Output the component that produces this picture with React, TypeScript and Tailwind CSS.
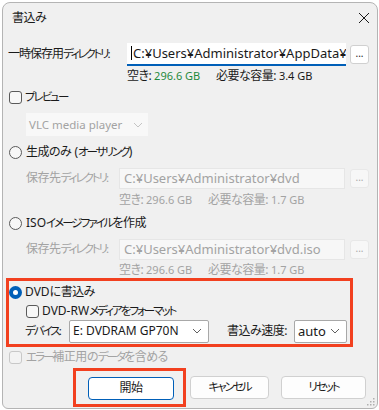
import React from "react";

const font = { fontFamily: '"Noto Sans", "Noto Sans CJK JP", sans-serif' };

// kanji-heavy Japanese text
const J: React.FC<{ children: React.ReactNode }> = ({ children }) => (
  <span className="text-[12px] tracking-[-0.5px] [font-feature-settings:'palt']">{children}</span>
);
// katakana / kana runs, narrow like Yu Gothic UI
const K: React.FC<{ children: React.ReactNode }> = ({ children }) => (
  <span className="text-[11.5px] tracking-[-2px] [font-feature-settings:'palt']">{children}</span>
);

const Chevron: React.FC<{ muted?: boolean }> = ({ muted }) => (
  <svg width="10" height="6" viewBox="0 0 10 6" className="shrink-0">
    <path d="M1 1l4 4 4-4" fill="none" stroke={muted ? "#c4c4c4" : "#606060"} strokeWidth="1" />
  </svg>
);

const Check: React.FC<{ disabled?: boolean }> = ({ disabled }) => (
  <span
    className={`w-[13px] h-[13px] rounded-[3px] border shrink-0 ${
      disabled ? "border-[#c8c8c8] bg-[#f3f3f3]" : "border-[#5a5a5a] bg-[#f7f7f7]"
    }`}
  />
);

const Radio: React.FC<{ checked?: boolean }> = ({ checked }) =>
  checked ? (
    <span className="w-[13px] h-[13px] rounded-full bg-[#005fb8] flex items-center justify-center shrink-0">
      <span className="w-[5px] h-[5px] rounded-full bg-white" />
    </span>
  ) : (
    <span className="w-[13px] h-[13px] rounded-full border border-[#5a5a5a] bg-[#f7f7f7] shrink-0" />
  );

const DotsButton: React.FC<{ disabled?: boolean }> = ({ disabled }) => (
  <div
    className={`w-[19px] h-[19px] rounded-[3px] border flex items-center justify-center text-[10px] leading-none pb-[3px] ${
      disabled ? "border-[#e8e8e8] bg-[#f7f7f7] text-[#a8a8a8]" : "border-[#d0d0d0] bg-white text-[#1a1a1a]"
    }`}
  >
    ...
  </div>
);

const PathRow: React.FC<{ path: string }> = ({ path }) => (
  <div className="h-[24px] flex items-center text-[#a3a3a3]">
    <span className="w-[116px] pl-[23px] shrink-0">
      <J>保存先</J>
      <K>ディレクトリ:</K>
    </span>
    <div className="w-[226px] h-[21px] border border-[#e6e6e6] bg-[#f7f7f7] flex items-center pl-[4px] overflow-hidden text-[13px]">
      {path}
    </div>
    <div className="ml-[5px]">
      <DotsButton disabled />
    </div>
  </div>
);

const SpaceRow: React.FC<{ need: string; h: string }> = ({ need, h }) => (
  <div className={`${h} flex items-center text-[#a3a3a3] pl-[116px] shrink-0 text-[11px]`}>
    <span className="w-[89px]">
      <J>空き:</J> 296.6 GB
    </span>
    <span>
      <J>必要な容量:</J> {need}
    </span>
  </div>
);

export default function App() {
  return (
    <div
      className="w-[379px] h-[410px] bg-white overflow-hidden text-[12px] leading-none whitespace-nowrap text-[#1a1a1a]"
      style={font}
    >
      <div className="ml-[2px] mt-[2px] w-[376px] h-[407px] rounded-t-[8px] rounded-b-[6px] border border-[#b4b4b4] bg-[#f0f0f0] flex flex-col relative">
        <div className="h-[29px] flex items-center justify-between pl-[9px] pr-[7px] shrink-0">
          <J>書込み</J>
          <svg width="12" height="12" viewBox="0 0 12 12">
            <path d="M1 1l10 10M11 1L1 11" stroke="#1a1a1a" strokeWidth="1" />
          </svg>
        </div>

        <div className="mt-[10px] h-[24px] flex items-center shrink-0">
          <span className="w-[124px] pl-[5px] shrink-0">
            <span className="text-[12px] tracking-[-1px] [font-feature-settings:'palt']">一時保存用</span>
            <span className="text-[11.5px] tracking-[-2.2px] [font-feature-settings:'palt']">ディレクトリ:</span>
          </span>
          <div className="w-[219px] h-[23px] bg-white border-b-2 border-[#005fb8] flex items-center pl-[4px] overflow-hidden text-[13px]">
            <span className="w-px h-[14px] bg-black mr-[1px] shrink-0" />
            C:¥Users¥Administrator¥AppData¥Local¥Temp
          </div>
          <div className="ml-[4px]">
            <DotsButton />
          </div>
        </div>

        <div className="h-[20px] flex items-center pl-[124px] shrink-0 text-[11px]">
          <span className="w-[89px]">
            <J>空き:</J> <span className="text-[#1f8a3c]">296.6 GB</span>
          </span>
          <span>
            <J>必要な容量:</J> 3.4 GB
          </span>
        </div>

        <div className="h-[22px] flex items-center gap-[3px] pl-[6px] shrink-0">
          <Check />
          <K>プレビュー</K>
        </div>

        <div className="h-[30px] pl-[23px] pt-[5px] shrink-0">
          <div className="w-[122px] h-[23px] bg-[#f8f8f8] flex items-center justify-between pl-[3px] pr-[5px] text-[#a3a3a3] text-[11.5px]">
            <span>VLC media player</span>
            <Chevron muted />
          </div>
        </div>

        <div className="h-[28px] flex items-center gap-[4px] pl-[6px] shrink-0">
          <Radio />
          <span>
            <J>生成のみ</J> (<K>オーサリング</K>)
          </span>
        </div>
        <PathRow path="C:¥Users¥Administrator¥dvd" />
        <SpaceRow need="1.7 GB" h="h-[20px]" />

        <div className="h-[26px] flex items-center gap-[4px] pl-[6px] shrink-0">
          <Radio />
          <span>
            ISO<K>イメージファイル</K>
            <J>を作成</J>
          </span>
        </div>
        <div className="h-[26px] flex items-center shrink-0">
          <div className="w-full">
            <PathRow path="C:¥Users¥Administrator¥dvd.iso" />
          </div>
        </div>
        <SpaceRow need="1.7 GB" h="h-[16px]" />

        <div className="ml-[3px] w-[347px] border-[3px] border-[#f2401f] pb-[1px] shrink-0">
          <div className="h-[22px] flex items-center gap-[3px]">
            <Radio checked />
            <span>
              DVD<J>に書込み</J>
            </span>
          </div>
          <div className="h-[16px] flex items-center gap-[3px] pl-[17px]">
            <Check />
            <span>
              DVD-RW<K>メディアをフォーマット</K>
            </span>
          </div>
          <div className="h-[24px] flex items-center pl-[16px]">
            <span className="w-[44px] shrink-0">
              <K>デバイス:</K>
            </span>
            <div className="w-[140px] h-[23px] bg-white border border-[#a8a8a8] rounded-[2px] flex items-center justify-between pl-[3px] pr-[6px]">
              <span>E: DVDRAM GP70N</span>
              <Chevron />
            </div>
            <span className="ml-[18px] w-[67px] shrink-0">
              <J>書込み速度:</J>
            </span>
            <div className="w-[53px] h-[23px] bg-white border border-[#a8a8a8] rounded-[2px] flex items-center justify-between pl-[3px] pr-[6px] text-[13px]">
              <span>auto</span>
              <Chevron />
            </div>
          </div>
        </div>

        <div className="h-[20px] flex items-center gap-[4px] pl-[6px] text-[#a3a3a3] shrink-0">
          <Check disabled />
          <span>
            <K>エラー</K>
            <J>補正用の</J>
            <K>データ</K>
            <J>を含める</J>
          </span>
        </div>

        <div className="h-[40px] flex items-center shrink-0">
          <div className="ml-[70px] w-[113px] h-[39px] border-[3px] border-[#f2401f] pl-[12px] pt-[6px]">
            <div className="w-[86px] h-[23px] bg-white border border-[#005fb8] rounded-[4px] flex items-center justify-center">
              <J>開始</J>
            </div>
          </div>
          <div className="ml-[4px] w-[79px] h-[23px] bg-[#fdfdfd] border border-[#d0d0d0] rounded-[4px] flex items-center justify-center">
            <K>キャンセル</K>
          </div>
          <div className="ml-[12px] w-[85px] h-[23px] bg-[#fdfdfd] border border-[#d0d0d0] rounded-[4px] flex items-center justify-center">
            <K>リセット</K>
          </div>
        </div>

        <svg width="8" height="8" viewBox="0 0 8 8" className="absolute right-[2px] bottom-[2px]">
          <rect x="6" y="0" width="1.5" height="1.5" fill="#b0b0b0" />
          <rect x="3" y="3" width="1.5" height="1.5" fill="#b0b0b0" />
          <rect x="6" y="3" width="1.5" height="1.5" fill="#b0b0b0" />
          <rect x="0" y="6" width="1.5" height="1.5" fill="#b0b0b0" />
          <rect x="3" y="6" width="1.5" height="1.5" fill="#b0b0b0" />
          <rect x="6" y="6" width="1.5" height="1.5" fill="#b0b0b0" />
        </svg>
      </div>
    </div>
  );
}
